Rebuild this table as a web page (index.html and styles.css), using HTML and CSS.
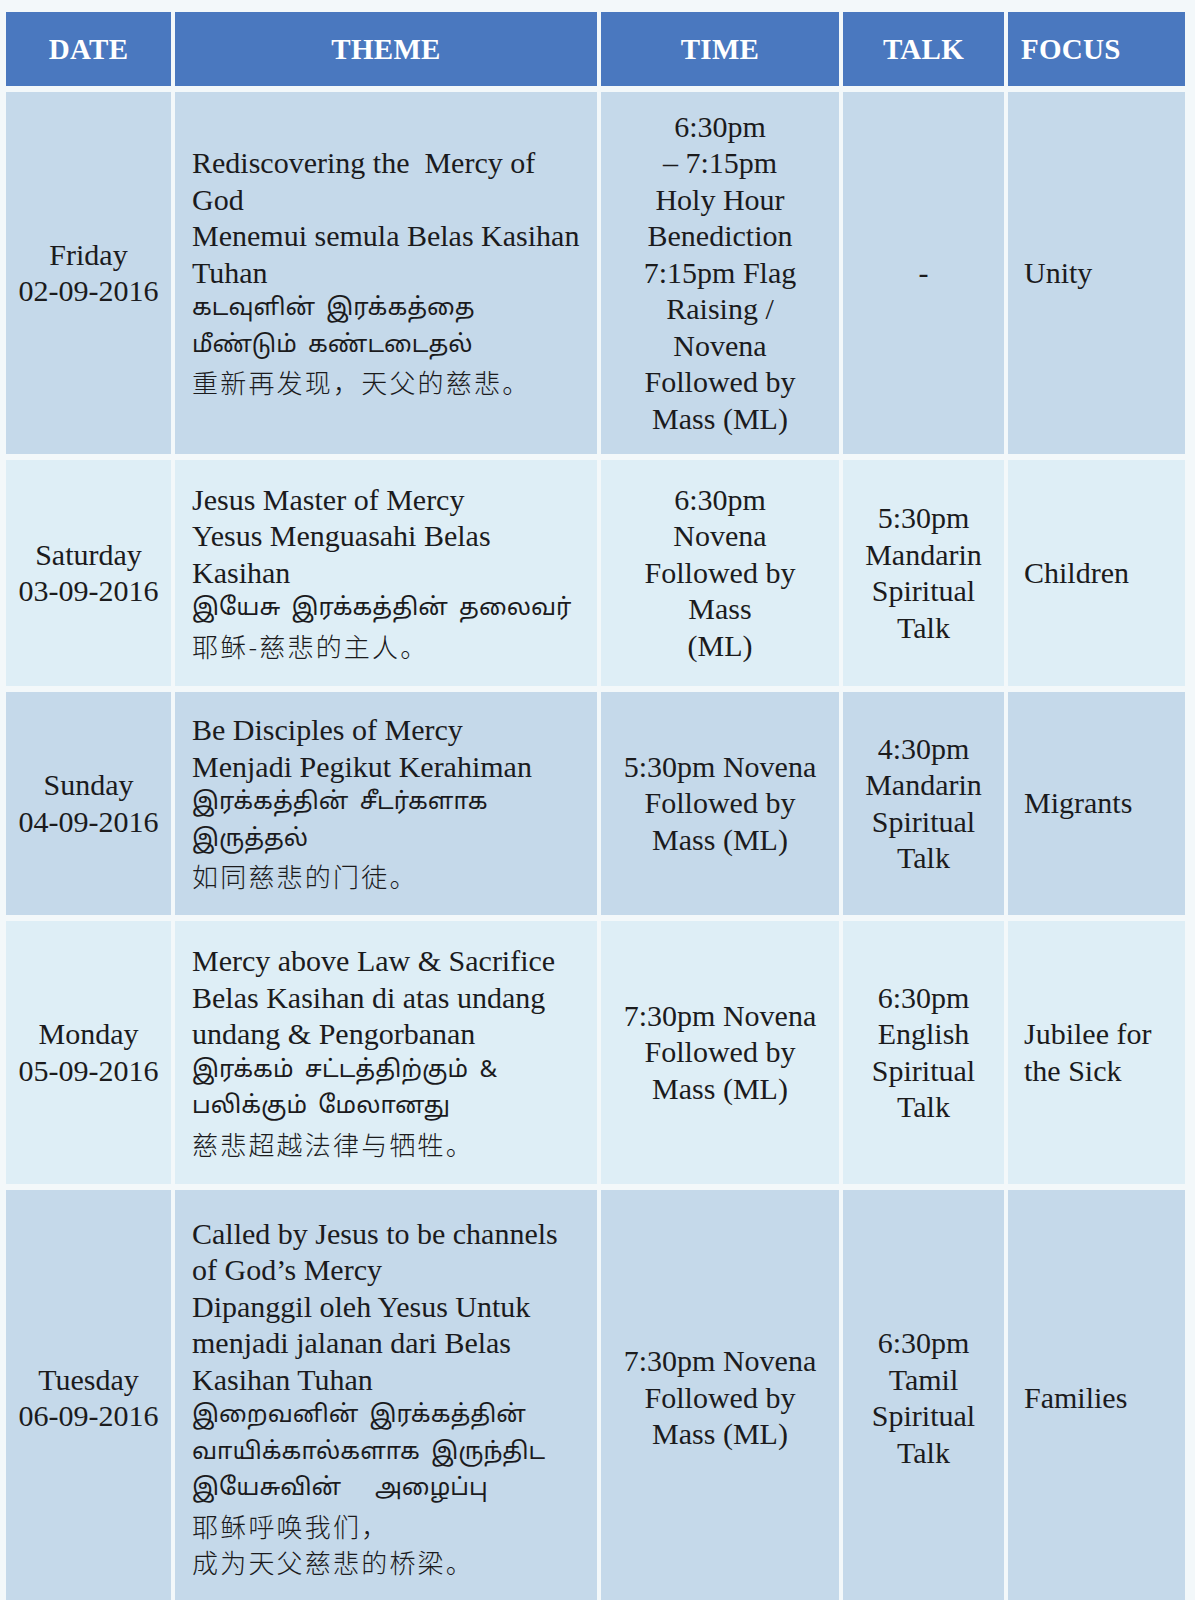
FILE: index.html
```html
<!DOCTYPE html>
<html lang="en">
<head>
<meta charset="utf-8">
<title>Novena Schedule</title>
<link rel="stylesheet" href="styles.css">
</head>
<body>
<table class="schedule">
  <colgroup>
    <col class="c-date"><col class="c-theme"><col class="c-time"><col class="c-talk"><col class="c-focus">
  </colgroup>
  <thead>
    <tr class="head">
      <th>DATE</th><th>THEME</th><th>TIME</th><th>TALK</th><th class="left">FOCUS</th>
    </tr>
  </thead>
  <tbody>
    <tr class="row dark r1">
      <td class="center">Friday<br>02-09-2016</td>
      <td class="theme">
        <div>Rediscovering the&nbsp; Mercy of</div>
        <div>God</div>
        <div>Menemui semula Belas Kasihan</div>
        <div>Tuhan</div>
        <div class="ta">கடவுளின் இரக்கத்தை</div>
        <div class="ta">மீண்டும் கண்டடைதல்</div>
        <div class="zh">重新再发现，天父的慈悲。</div>
      </td>
      <td class="center">6:30pm<br>– 7:15pm<br>Holy Hour<br>Benediction<br>7:15pm Flag<br>Raising /<br>Novena<br>Followed by<br>Mass (ML)</td>
      <td class="center">-</td>
      <td class="focus">Unity</td>
    </tr>
    <tr class="row light r2">
      <td class="center">Saturday<br>03-09-2016</td>
      <td class="theme">
        <div>Jesus Master of Mercy</div>
        <div>Yesus Menguasahi Belas</div>
        <div>Kasihan</div>
        <div class="ta">இயேசு இரக்கத்தின் தலைவர்</div>
        <div class="zh">耶稣-慈悲的主人。</div>
      </td>
      <td class="center">6:30pm<br>Novena<br>Followed by<br>Mass<br>(ML)</td>
      <td class="center">5:30pm<br>Mandarin<br>Spiritual<br>Talk</td>
      <td class="focus">Children</td>
    </tr>
    <tr class="row dark r3">
      <td class="center">Sunday<br>04-09-2016</td>
      <td class="theme">
        <div>Be Disciples of Mercy</div>
        <div>Menjadi Pegikut Kerahiman</div>
        <div class="ta">இரக்கத்தின் சீடர்களாக</div>
        <div class="ta">இருத்தல்</div>
        <div class="zh">如同慈悲的门徒。</div>
      </td>
      <td class="center">5:30pm Novena<br>Followed by<br>Mass (ML)</td>
      <td class="center">4:30pm<br>Mandarin<br>Spiritual<br>Talk</td>
      <td class="focus">Migrants</td>
    </tr>
    <tr class="row light r4">
      <td class="center">Monday<br>05-09-2016</td>
      <td class="theme">
        <div>Mercy above Law &amp; Sacrifice</div>
        <div>Belas Kasihan di atas undang</div>
        <div>undang &amp; Pengorbanan</div>
        <div class="ta">இரக்கம் சட்டத்திற்கும் &amp;</div>
        <div class="ta">பலிக்கும் மேலானது</div>
        <div class="zh">慈悲超越法律与牺牲。</div>
      </td>
      <td class="center">7:30pm Novena<br>Followed by<br>Mass (ML)</td>
      <td class="center">6:30pm<br>English<br>Spiritual<br>Talk</td>
      <td class="focus">Jubilee for<br>the Sick</td>
    </tr>
    <tr class="row dark r5">
      <td class="center">Tuesday<br>06-09-2016</td>
      <td class="theme">
        <div>Called by Jesus to be channels</div>
        <div>of God’s Mercy</div>
        <div>Dipanggil oleh Yesus Untuk</div>
        <div>menjadi jalanan dari Belas</div>
        <div>Kasihan Tuhan</div>
        <div class="ta">இறைவனின் இரக்கத்தின்</div>
        <div class="ta">வாயிக்கால்களாக இருந்திட</div>
        <div class="ta">இயேசுவின் &nbsp; அழைப்பு</div>
        <div class="zh">耶稣呼唤我们，</div>
        <div class="zh">成为天父慈悲的桥梁。</div>
      </td>
      <td class="center">7:30pm Novena<br>Followed by<br>Mass (ML)</td>
      <td class="center">6:30pm<br>Tamil<br>Spiritual<br>Talk</td>
      <td class="focus">Families</td>
    </tr>
  </tbody>
</table>
</body>
</html>
```
FILE: styles.css
```css
html, body {
  margin: 0;
  padding: 0;
  background: #f3f8fa;
}
body {
  overflow: hidden;
  height: 1600px;
}
.schedule {
  border-collapse: separate;
  border-spacing: 4px 6px;
  margin: 6px 0 0 2px;
  table-layout: fixed;
  width: 1187px;
  font-family: "Liberation Serif", "Times New Roman", serif;
  color: #1b1b1d;
}
.c-date { width: 165px; }
.c-theme { width: 422px; }
.c-time { width: 238px; }
.c-talk { width: 161px; }
.c-focus { width: 177px; }

.head th {
  height: 74px;
  padding: 0;
  background: #4a78bf;
  color: #ffffff;
  font-size: 29px;
  font-weight: bold;
  text-align: center;
  vertical-align: middle;
  letter-spacing: 0.3px;
}
.head th.left {
  text-align: left;
  padding-left: 13px;
}
.row td {
  padding: 0;
  font-size: 30px;
  line-height: 36.5px;
  vertical-align: middle;
  white-space: nowrap;
}
.dark td { background: #c5d9ea; }
.light td { background: #deeef6; }
.r1 td { height: 362px; }
.r2 td { height: 226px; }
.r3 td { height: 223px; }
.r4 td { height: 263px; }
.r5 td { height: 416px; }

.center { text-align: center; }
.row td.theme { padding-left: 17px; text-align: left; }
.row td.focus { padding-left: 16px; text-align: left; }

.ta {
  font-family: "Noto Sans Tamil", "Lohit Tamil", "Noto Serif Tamil", "Noto Sans", sans-serif;
  font-size: 24px;
  word-spacing: 5px;
  line-height: 36.5px;
  height: 36.5px;
}
.zh {
  font-family: "Noto Sans CJK SC", sans-serif;
  font-size: 26px;
  font-weight: 300;
  line-height: 36.5px;
  height: 36.5px;
  letter-spacing: 2.2px;
}
```
